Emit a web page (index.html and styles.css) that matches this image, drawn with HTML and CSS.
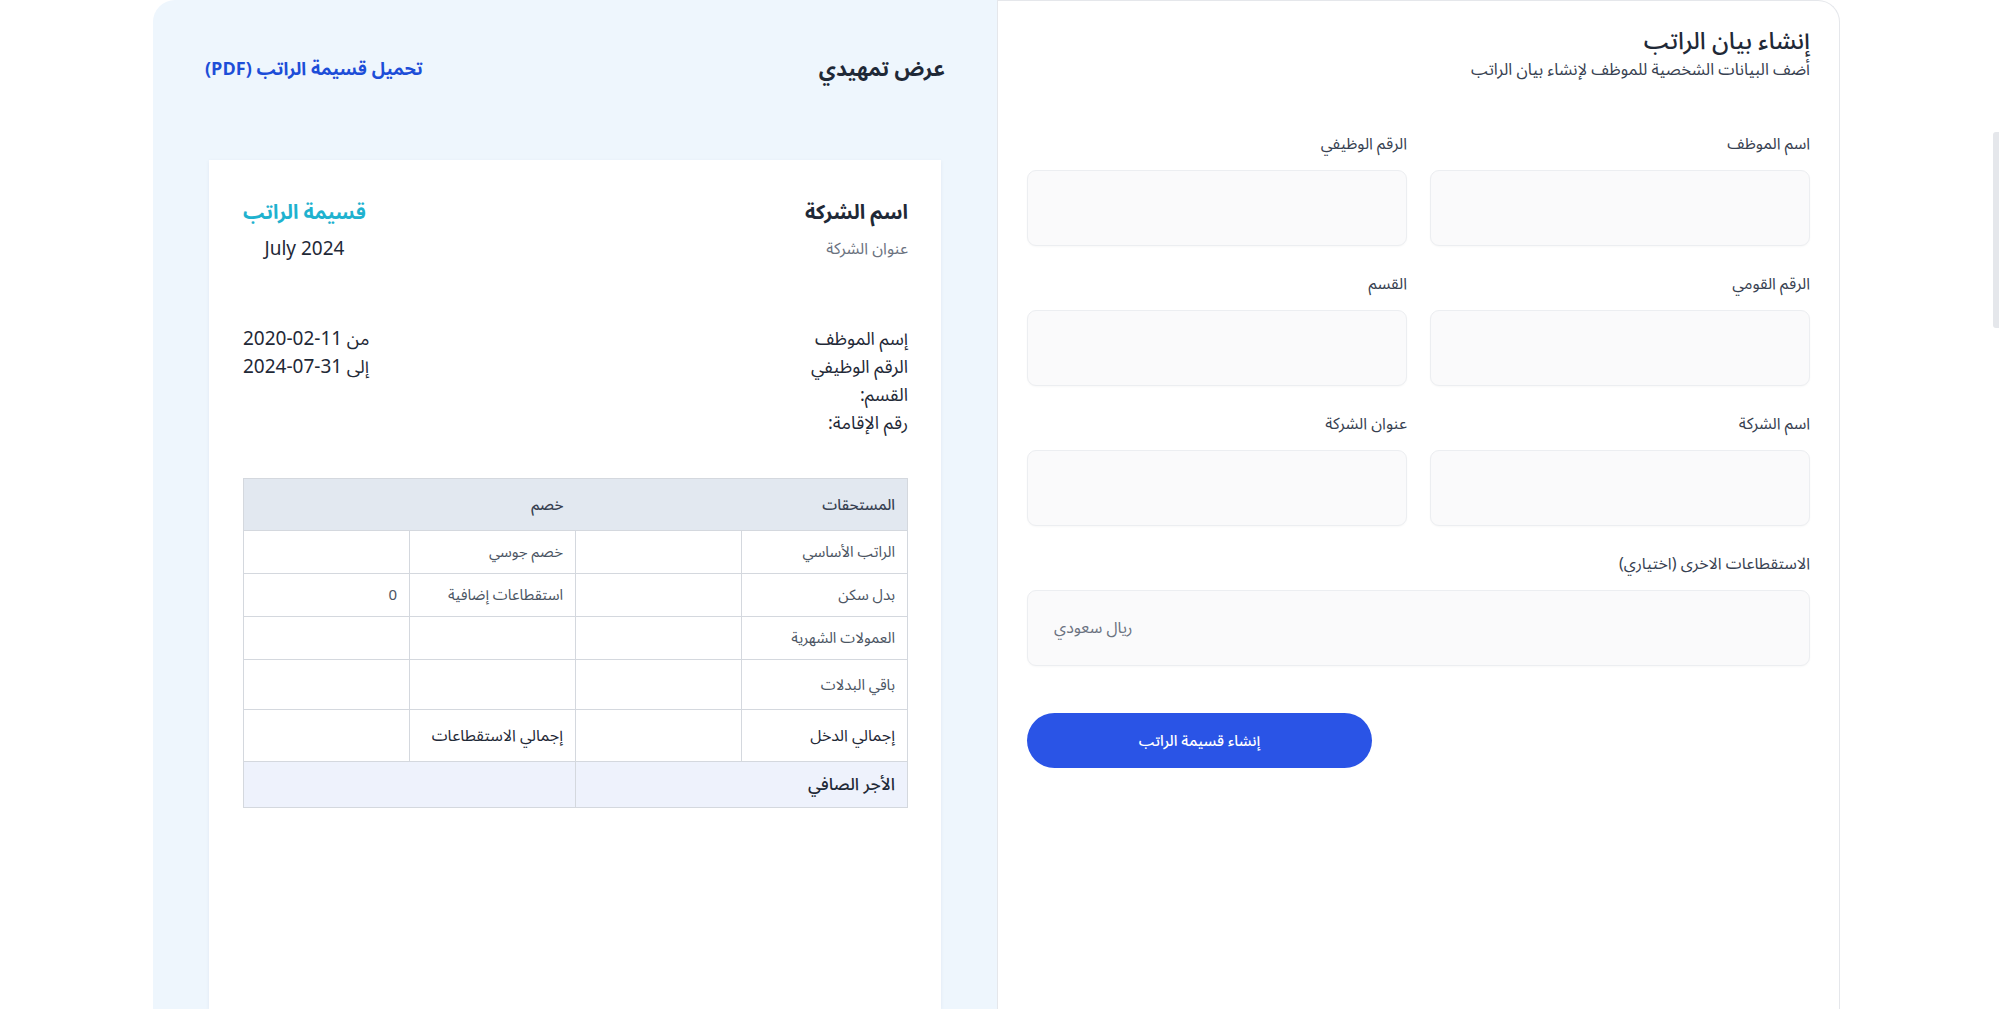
FILE: index.html
```html
<!DOCTYPE html>
<html lang="ar" dir="rtl">
<head>
<meta charset="utf-8">
<title>إنشاء بيان الراتب</title>
<link rel="stylesheet" href="styles.css">
</head>
<body>
<div class="page">
  <section class="form-panel">
    <div class="form-head">
      <h1 class="form-title">إنشاء بيان الراتب</h1>
      <p class="form-sub">أضف البيانات الشخصية للموظف لإنشاء بيان الراتب</p>
    </div>
    <div class="form-grid">
      <div class="field">
        <label class="field-label">اسم الموظف</label>
        <input class="field-input" type="text">
      </div>
      <div class="field">
        <label class="field-label">الرقم الوظيفي</label>
        <input class="field-input" type="text">
      </div>
      <div class="field">
        <label class="field-label">الرقم القومي</label>
        <input class="field-input" type="text">
      </div>
      <div class="field">
        <label class="field-label">القسم</label>
        <input class="field-input" type="text">
      </div>
      <div class="field">
        <label class="field-label">اسم الشركة</label>
        <input class="field-input" type="text">
      </div>
      <div class="field">
        <label class="field-label">عنوان الشركة</label>
        <input class="field-input" type="text">
      </div>
      <div class="field field-wide">
        <label class="field-label">الاستقطاعات الاخرى (اختياري)</label>
        <input class="field-input field-ltr" type="text" placeholder="ريال سعودي">
      </div>
    </div>
    <button class="submit-btn" type="button">إنشاء قسيمة الراتب</button>
  </section>

  <section class="preview-panel">
    <div class="preview-head">
      <h2 class="preview-title">عرض تمهيدي</h2>
      <a class="pdf-link" href="#">تحميل قسيمة الراتب (PDF)</a>
    </div>
    <div class="slip">
      <div class="slip-top">
        <div class="company">
          <div class="company-name">اسم الشركة</div>
          <div class="company-addr">عنوان الشركة</div>
        </div>
        <div class="slip-badge">
          <div class="slip-name">قسيمة الراتب</div>
          <div class="slip-month">July 2024</div>
        </div>
      </div>
      <div class="slip-info">
        <div class="info-lines">
          <div class="info-line">إسم الموظف</div>
          <div class="info-line">الرقم الوظيفي</div>
          <div class="info-line">القسم:</div>
          <div class="info-line">رقم الإقامة:</div>
        </div>
        <div class="info-dates">
          <div class="info-line">من <span class="num">2020-02-11</span></div>
          <div class="info-line">إلى <span class="num">2024-07-31</span></div>
        </div>
      </div>
      <table class="pay-table">
        <colgroup>
          <col class="col"><col class="col"><col class="col"><col class="col">
        </colgroup>
        <thead>
          <tr class="row-head">
            <th colspan="2">المستحقات</th>
            <th colspan="2">خصم</th>
          </tr>
        </thead>
        <tbody>
          <tr class="row-a">
            <td>الراتب الأساسي</td><td></td><td>خصم جوسي</td><td></td>
          </tr>
          <tr class="row-a">
            <td>بدل سكن</td><td></td><td>استقطاعات إضافية</td><td>0</td>
          </tr>
          <tr class="row-a">
            <td>العمولات الشهرية</td><td></td><td></td><td></td>
          </tr>
          <tr class="row-b">
            <td>باقي البدلات</td><td></td><td></td><td></td>
          </tr>
          <tr class="row-c">
            <td class="dark">إجمالي الدخل</td><td></td><td class="dark">إجمالي الاستقطاعات</td><td></td>
          </tr>
          <tr class="row-net">
            <td colspan="2">الأجر الصافي</td><td colspan="2"></td>
          </tr>
        </tbody>
      </table>
    </div>
  </section>
</div>
<div class="scroll-thumb"></div>
</body>
</html>
```

FILE: styles.css
```css
html, body {
  margin: 0;
  padding: 0;
  background: #ffffff;
  overflow: hidden;
  height: 100%;
}
body {
  font-family: "Noto Sans Arabic", "Noto Sans", "DejaVu Sans", sans-serif;
  color: #1f2937;
}
.page {
  display: flex;
  flex-direction: row;
  width: 1687px;
  height: 1009px;
  margin-right: 159px;
}
.form-panel {
  box-sizing: border-box;
  width: 843px;
  flex: none;
  border: 1px solid #e5e7eb;
  border-top-right-radius: 22px;
  border-bottom: none;
  background: #ffffff;
  padding: 26px 29px 0 29px;
  display: flex;
  flex-direction: column;
}
.form-head {
  margin-bottom: 53px;
}
.form-title {
  margin: 0;
  font-size: 24px;
  line-height: 30px;
  font-weight: 500;
  color: #1f2937;
}
.form-sub {
  margin: 3px 0 0 0;
  font-size: 16.5px;
  line-height: 20px;
  color: #374151;
}
.form-grid {
  display: grid;
  grid-template-columns: repeat(2, minmax(0, 1fr));
  column-gap: 23px;
  row-gap: 27px;
}
.field {
  display: flex;
  flex-direction: column;
  min-width: 0;
}
.field-wide {
  grid-column: 1 / span 2;
}
.field-label {
  font-size: 16px;
  line-height: 22px;
  color: #374151;
  margin-bottom: 15px;
}
.field-input {
  box-sizing: border-box;
  width: 100%;
  height: 76px;
  border: 1px solid #eceef1;
  border-radius: 9px;
  background: #fafafb;
  box-shadow: 0 1px 2px rgba(0, 0, 0, 0.03);
  font-family: inherit;
  font-size: 16px;
  padding: 0 26px;
  outline: none;
}
.field-ltr {
  text-align: left;
}
.field-ltr::placeholder {
  color: #6b7280;
}
.submit-btn {
  align-self: flex-end;
  margin-top: 47px;
  width: 345px;
  height: 55px;
  border: none;
  border-radius: 28px;
  background: #2a54e6;
  color: #ffffff;
  font-family: inherit;
  font-size: 15px;
  font-weight: 500;
  cursor: pointer;
}

.preview-panel {
  box-sizing: border-box;
  width: 844px;
  flex: none;
  background: #eef6fd;
  border-top-left-radius: 22px;
  padding: 54px 52px 0 52px;
  display: flex;
  flex-direction: column;
}
.preview-head {
  display: flex;
  justify-content: space-between;
  align-items: center;
  height: 30px;
  margin-bottom: 76px;
}
.preview-title {
  margin: 0;
  font-size: 21px;
  line-height: 30px;
  font-weight: 700;
  color: #1f2937;
}
.pdf-link {
  font-size: 18px;
  font-weight: 700;
  color: #1d4ed8;
  text-decoration: none;
}
.slip {
  flex: 1;
  margin: 0 4px;
  background: #ffffff;
  box-shadow: 0 1px 4px rgba(15, 40, 80, 0.06);
  padding: 38px 33px 0 34px;
}
.slip-top {
  display: flex;
  justify-content: space-between;
  align-items: flex-start;
}
.company-name {
  font-size: 20px;
  line-height: 30px;
  font-weight: 700;
  color: #1f2937;
}
.company-addr {
  margin-top: 10px;
  font-size: 16px;
  line-height: 22px;
  color: #6b7280;
}
.slip-badge {
  text-align: center;
}
.slip-name {
  font-size: 20px;
  line-height: 30px;
  font-weight: 700;
  color: #1fb2cf;
}
.slip-month {
  margin-top: 9px;
  font-size: 19px;
  line-height: 24px;
  color: #1f2937;
}
.slip-info {
  display: flex;
  justify-content: space-between;
  margin-top: 64px;
  font-size: 18px;
  color: #1f2937;
}
.info-line {
  height: 28px;
  line-height: 28px;
  overflow: visible;
}
.info-dates {
  text-align: left;
}
.num {
  direction: ltr;
  unicode-bidi: isolate;
  font-size: 19px;
  letter-spacing: 0.6px;
}
.pay-table {
  margin-top: 41px;
  width: 100%;
  border-collapse: collapse;
  table-layout: fixed;
  font-size: 15px;
  color: #4b5563;
  border: 1px solid #d4d8de;
}
.pay-table th {
  background: #e2e8f0;
  height: 51px;
  font-weight: 500;
  text-align: right;
  padding: 0 12px;
  color: #374151;
  font-size: 15px;
}
.pay-table td {
  border: 1px solid #d4d8de;
  text-align: right;
  padding: 0 12px;
}
.row-a td { height: 42px; }
.row-b td { height: 49px; }
.row-c td { height: 51px; font-size: 16px; }
.row-net td {
  height: 45px;
  background: #eef2fc;
  font-size: 17px;
  color: #1f2937;
  font-weight: 500;
}
.dark {
  color: #1f2937;
}
.scroll-thumb {
  position: fixed;
  right: 0;
  top: 132px;
  width: 6px;
  height: 196px;
  background: #e5e7eb;
  border-radius: 3px 0 0 3px;
}
```
